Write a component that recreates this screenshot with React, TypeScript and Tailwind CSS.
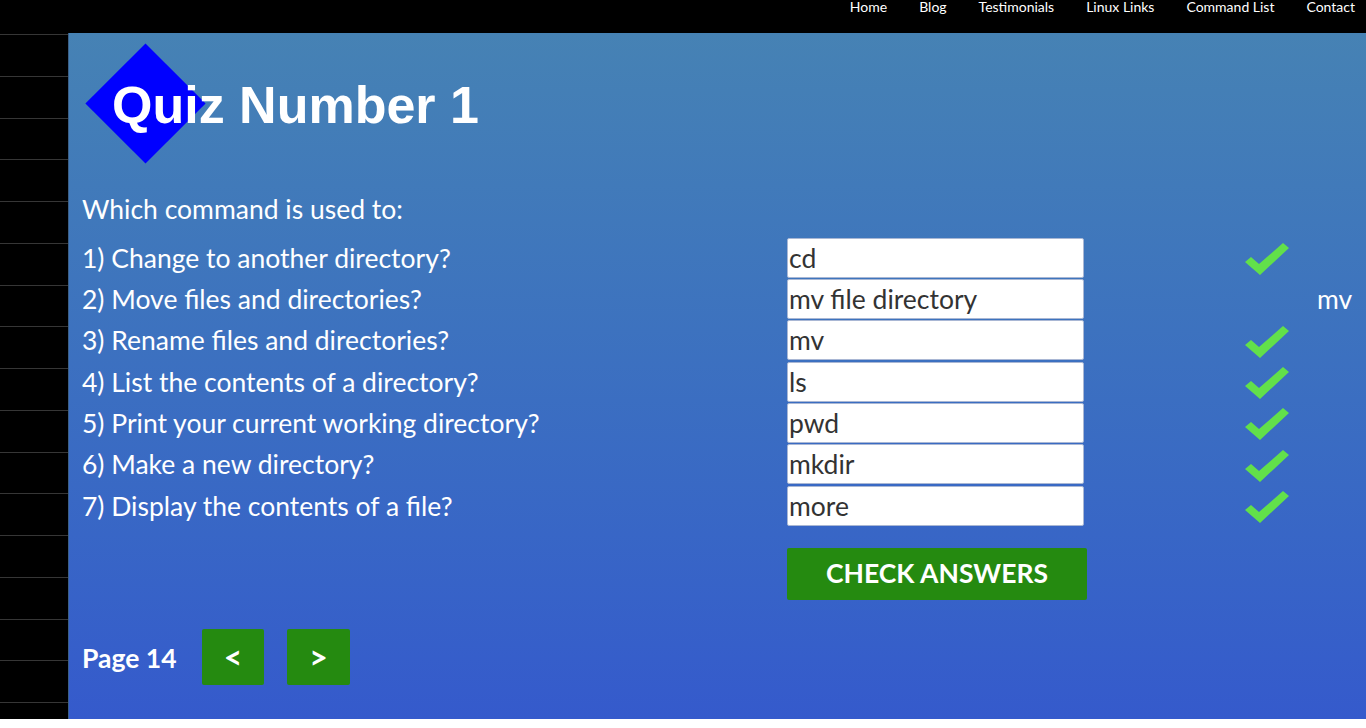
const navLinks = ["Home", "Blog", "Testimonials", "Linux Links", "Command List", "Contact"];

const questions = [
  { q: "1) Change to another directory?", a: "cd", ok: true },
  { q: "2) Move files and directories?", a: "mv file directory", ok: false, fix: "mv" },
  { q: "3) Rename files and directories?", a: "mv", ok: true },
  { q: "4) List the contents of a directory?", a: "ls", ok: true },
  { q: "5) Print your current working directory?", a: "pwd", ok: true },
  { q: "6) Make a new directory?", a: "mkdir", ok: true },
  { q: "7) Display the contents of a file?", a: "more", ok: true },
];

const Tick = () => (
  <svg width="44" height="34" viewBox="0 0 44 34">
    <polygon points="0,20 6,15 14,22 38,1 44,6 15,33" fill="#62e04a" />
  </svg>
);

const App = () => {
  return (
    <div className="w-[1366px] bg-white" style={{ fontFamily: "Lato, 'Open Sans', sans-serif" }}>
      <div className="h-[33px] bg-black flex justify-end gap-[32px] pr-[11px]">
        {navLinks.map((link) => (
          <a key={link} className="text-[14px] leading-[14px] text-white">
            {link}
          </a>
        ))}
      </div>
      <div className="flex">
        <div className="w-[68px] bg-black flex flex-col overflow-hidden h-[686px] pt-[1px]">
          {Array.from({ length: 17 }).map((_, i) => (
            <div key={i} className="h-[41.75px] shrink-0 border-t border-[#363636]" />
          ))}
        </div>
        <div className="flex-1 h-[686px] border-l border-[#3b5f86] bg-gradient-to-b from-[#4682b4] to-[#355acc] pl-[13px] text-white">
          <div className="relative h-[161px]">
            <div className="absolute left-[21px] top-[28px] w-[85px] h-[85px] rotate-45 bg-[#0000ff]" />
            <h1
              className="relative ml-[30px] pt-[46px] text-[52px] leading-[52px] font-bold"
              style={{ fontFamily: "'Liberation Sans', Arial, sans-serif" }}
            >
              Quiz Number 1
            </h1>
          </div>
          <p className="text-[26.5px] leading-[30px] mb-[13px]">Which command is used to:</p>
          {questions.map((item) => (
            <div key={item.q} className="flex items-center h-[41.33px]">
              <div className="w-[705px] text-[26.5px] leading-[30px]">{item.q}</div>
              <input
                readOnly
                value={item.a}
                className="w-[297px] h-[40px] bg-white border border-[#a9b7d4] rounded-[2px] px-[1px] text-[26.5px] text-[#333] outline-none"
              />
              <div className="w-[161px]" />
              <div className="w-[72px] flex pt-[3px]">{item.ok && <Tick />}</div>
              <div className="text-[26.5px] leading-[30px]">{item.fix}</div>
            </div>
          ))}
          <button
            type="button"
            className="ml-[705px] mt-[22px] w-[300px] h-[52px] bg-[#258a10] rounded-[2px] text-[26.5px] font-bold uppercase text-white"
          >
            Check Answers
          </button>
          <div className="flex items-center mt-[29px]">
            <span className="text-[26.5px] font-bold w-[120px] pt-[3px]">Page 14</span>
            <button type="button" className="w-[62px] h-[56px] bg-[#258a10] rounded-[2px] text-[32px] font-bold text-white">
              &lt;
            </button>
            <button type="button" className="ml-[23px] w-[63px] h-[56px] bg-[#258a10] rounded-[2px] text-[32px] font-bold text-white">
              &gt;
            </button>
          </div>
        </div>
      </div>
    </div>
  );
};

export default App;
